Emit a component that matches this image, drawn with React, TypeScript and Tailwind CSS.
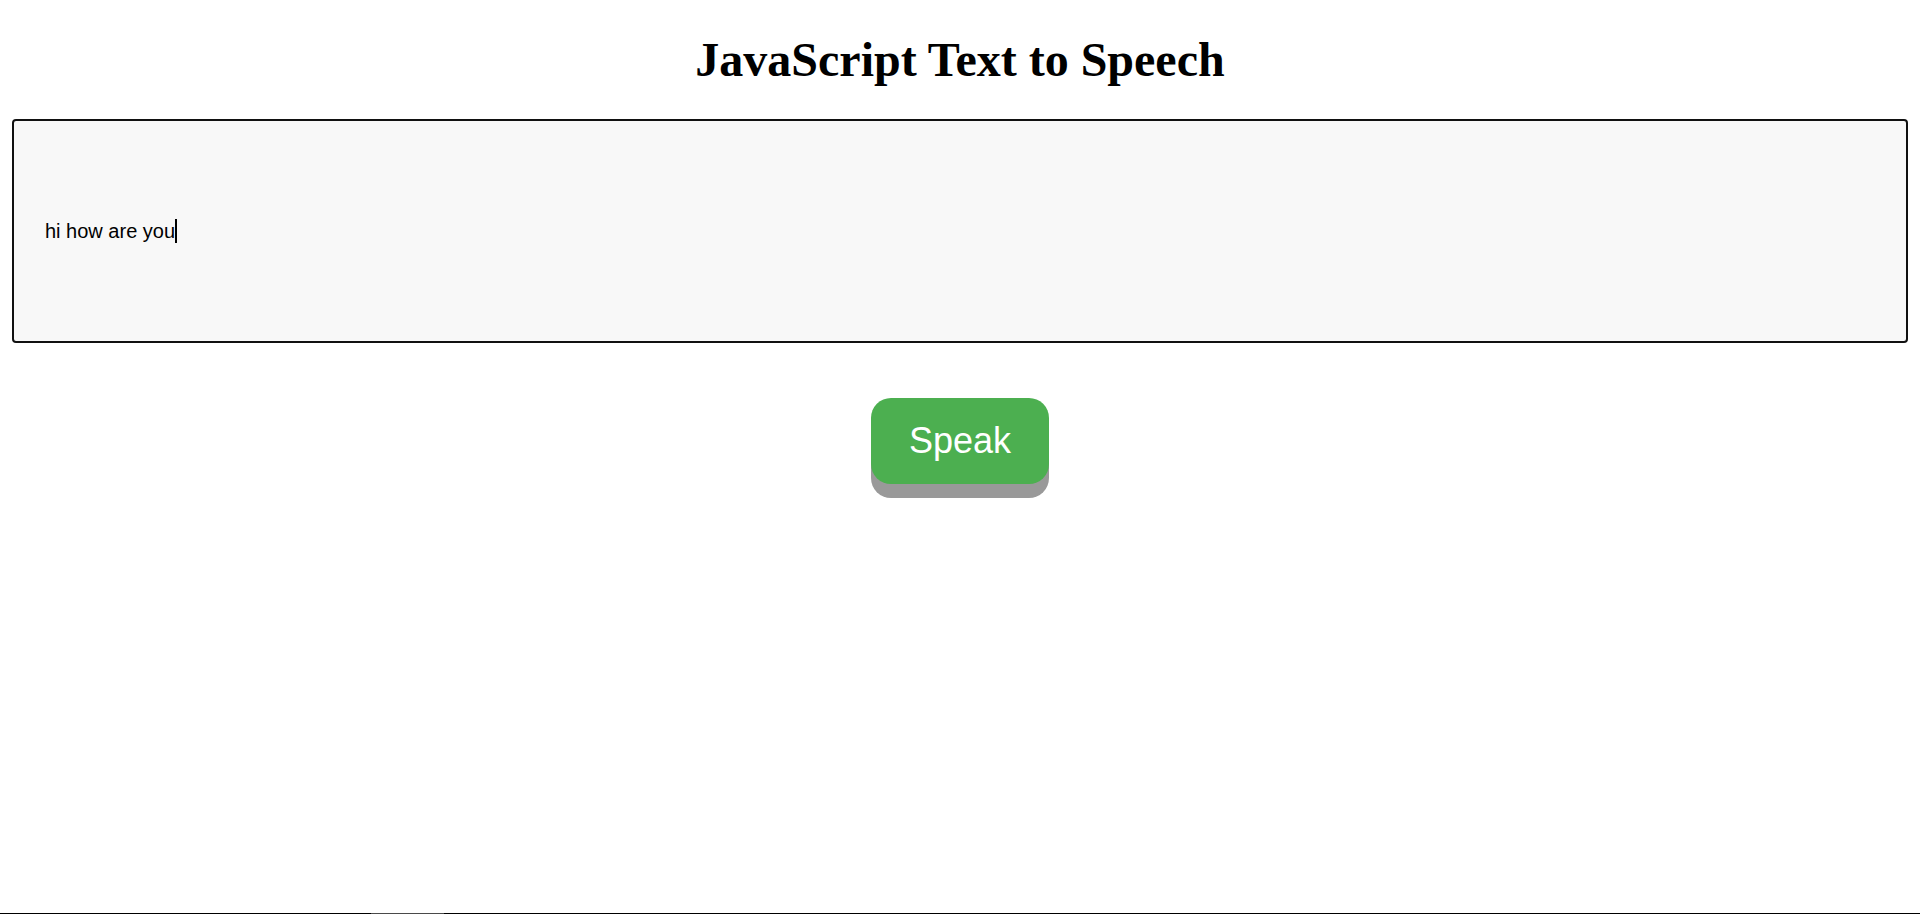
export default function App() {
  return (
    <div className="h-[914px] flex flex-col bg-white overflow-hidden">
      <main className="flex-1 flex flex-col">
        <h1 className="mt-[33px] mb-[33px] text-center text-[48px] leading-[53px] font-bold text-black font-['Liberation_Serif','Times_New_Roman',serif]">
          JavaScript Text to Speech
        </h1>
        <div className="mx-3 h-[224px] flex items-center pl-[31px] border-2 border-[#111] rounded-[4px] bg-[#f8f8f8]">
          <span className="text-[20px] leading-[23px] text-black font-['Liberation_Sans',Arial,sans-serif]">
            hi how are you
          </span>
          <span className="w-[2px] h-[24px] bg-black" />
        </div>
        <div className="mt-[55px] flex justify-center">
          <button className="px-[38px] py-[22px] rounded-[20px] bg-[#4caf50] text-white text-[36px] leading-[42px] font-['Liberation_Sans',Arial,sans-serif] shadow-[0_14px_0_#999]">
            Speak
          </button>
        </div>
      </main>
      <div className="h-px bg-black flex">
        <div className="ml-[371px] w-[73px] bg-[#4a4a4a]" />
      </div>
    </div>
  )
}
